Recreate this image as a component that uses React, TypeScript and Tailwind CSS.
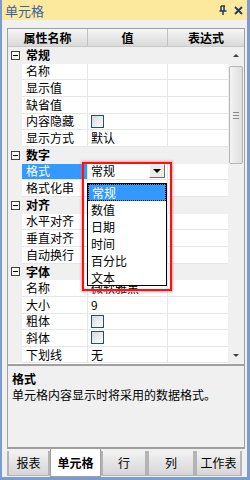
type Row =
  | { kind: "group"; label: string }
  | { kind: "prop"; label: string; value?: string; check?: boolean; selected?: boolean; dropdown?: boolean };

const rows: Row[] = [
  { kind: "group", label: "常规" },
  { kind: "prop", label: "名称" },
  { kind: "prop", label: "显示值" },
  { kind: "prop", label: "缺省值" },
  { kind: "prop", label: "内容隐藏", check: true },
  { kind: "prop", label: "显示方式", value: "默认" },
  { kind: "group", label: "数字" },
  { kind: "prop", label: "格式", value: "常规", selected: true, dropdown: true },
  { kind: "prop", label: "格式化串" },
  { kind: "group", label: "对齐" },
  { kind: "prop", label: "水平对齐" },
  { kind: "prop", label: "垂直对齐" },
  { kind: "prop", label: "自动换行" },
  { kind: "group", label: "字体" },
  { kind: "prop", label: "名称", value: "微软雅黑" },
  { kind: "prop", label: "大小", value: "9" },
  { kind: "prop", label: "粗体", check: true },
  { kind: "prop", label: "斜体", check: true },
  { kind: "prop", label: "下划线", value: "无" },
];

const options = ["常规", "数值", "日期", "时间", "百分比", "文本"];
const tabs = ["报表", "单元格", "行", "列", "工作表"];

function Checkbox() {
  return <div className="w-[13px] h-[13px] border border-[#1c5180] bg-linear-to-br from-[#d8d8d8] to-white" />;
}

function Collapse() {
  return (
    <div className="w-[9px] h-[9px] border border-[#404040] bg-white flex items-center justify-center">
      <div className="w-[5px] h-px bg-black" />
    </div>
  );
}

function GridRow({ row }: { row: Row }) {
  if (row.kind === "group") {
    return (
      <div className="h-[16.67px] flex items-center bg-[#f0f0f0]">
        <div className="w-[14px] flex justify-center pl-[1px]">
          <Collapse />
        </div>
        <span className="pl-[4px] font-bold leading-none">{row.label}</span>
      </div>
    );
  }
  return (
    <div className="h-[16.67px] flex">
      <div className="w-[14px] bg-[#f0f0f0]" />
      <div
        className={`w-[66px] border-r border-b border-[#e6e6e6] pl-[4px] flex items-center leading-none ${
          row.selected ? "bg-[#3399ff] text-white" : "bg-white"
        }`}
      >
        {row.label}
      </div>
      <div className="w-[80px] border-r border-b border-[#e6e6e6] bg-white pl-[3px] pr-[2px] flex items-center leading-none">
        {row.check ? <Checkbox /> : row.value}
        {row.dropdown && (
          <div className="ml-auto w-[16px] h-[14px] border border-t-white border-l-white border-r-[#707070] border-b-[#707070] bg-[#ececec] flex items-center justify-center">
            <div className="w-0 h-0 border-l-[4px] border-r-[4px] border-t-[4px] border-l-transparent border-r-transparent border-t-black" />
          </div>
        )}
      </div>
      <div className="flex-1 border-b border-[#e6e6e6] bg-white" />
    </div>
  );
}

export default function App() {
  return (
    <div className="relative w-[250px] h-[480px] flex flex-col bg-[#f0f0f0] border-l-2 border-r-[3px] border-b-[3px] border-[#7b9bd1] text-[12px] text-black font-['Noto_Sans_CJK_SC','Noto_Sans',sans-serif] overflow-hidden">
      {/* title bar */}
      <div className="h-[20px] shrink-0 bg-[#fde99e] flex items-center pl-[3px] pr-[4px]">
        <span className="text-[13px] text-[#3563a8] leading-none">单元格</span>
        <div className="ml-auto flex items-center gap-[7px]">
          <svg width="8" height="10" viewBox="0 0 8 10" className="text-[#1e3a62]">
            <path d="M2 1h4M2 1v5M5 1v5M0.5 6h7M4 6v4" stroke="currentColor" strokeWidth="1.5" fill="none" />
          </svg>
          <svg width="9" height="9" viewBox="0 0 9 9" className="text-[#1e3a62]">
            <path d="M1 1l7 7M8 1l-7 7" stroke="currentColor" strokeWidth="1.8" fill="none" />
          </svg>
        </div>
      </div>

      <div className="flex-1 flex flex-col pt-[8px] pl-[5px] pr-[2px]">
        {/* property grid */}
        <div className="h-[337px] shrink-0 border border-[#a0a0a0] bg-white flex flex-col">
          <div className="h-[18px] shrink-0 flex font-bold bg-linear-to-b from-[#f6f6f6] to-[#d9d9d9] border-b border-[#c8c8c8]">
            <div className="w-[80px] flex items-center justify-center border-r border-[#c0c0c0]">属性名称</div>
            <div className="w-[80px] flex items-center justify-center border-r border-[#c0c0c0]">值</div>
            <div className="flex-1 flex items-center justify-center">表达式</div>
          </div>
          <div className="flex-1 flex overflow-hidden">
            <div className="flex-1 overflow-hidden">
              {rows.map((r, i) => (
                <GridRow key={`row/${i}`} row={r} />
              ))}
            </div>
            {/* scrollbar */}
            <div className="w-[16px] bg-[#f0f0f0] flex flex-col items-center">
              <div className="h-[17px] flex items-center justify-center">
                <div className="w-0 h-0 border-l-[3px] border-r-[3px] border-b-[3px] border-l-transparent border-r-transparent border-b-[#404040]" />
              </div>
              <div className="mt-[2px] w-[14px] h-[98px] rounded-[2px] border border-[#b5b5b5] bg-linear-to-r from-[#f4f4f4] to-[#dedede] flex flex-col items-center justify-center gap-[2px]">
                <div className="w-[6px] h-px bg-[#8a8a8a]" />
                <div className="w-[6px] h-px bg-[#8a8a8a]" />
                <div className="w-[6px] h-px bg-[#8a8a8a]" />
              </div>
              <div className="flex-1" />
              <div className="h-[17px] flex items-center justify-center">
                <div className="w-0 h-0 border-l-[3px] border-r-[3px] border-t-[3px] border-l-transparent border-r-transparent border-t-[#404040]" />
              </div>
            </div>
          </div>
        </div>

        {/* description */}
        <div className="h-[84px] shrink-0 border border-[#a0a0a0] border-b-2 bg-[#f0f0f0] px-[4px] pt-[5px]">
          <div className="font-bold leading-[16px]">格式</div>
          <div className="leading-[16px]">单元格内容显示时将采用的数据格式。</div>
        </div>

        {/* tabs */}
        <div className="flex-1 flex items-start pt-[2px]">
          {tabs.map((t, i) =>
            i === 1 ? (
              <div
                key={t}
                className="w-[51px] h-[28px] -mt-[2px] bg-white border border-t-0 border-[#a0a0a0] flex items-center justify-center font-bold"
              >
                {t}
              </div>
            ) : (
              <div
                key={t}
                className={`h-[25px] ${
                  i === 0 ? "w-[43px]" : i === 2 ? "w-[46px]" : i === 3 ? "w-[48px]" : "w-[47px]"
                } bg-linear-to-b from-[#f2f2f2] to-[#d6d6d6] border-x-2 border-b border-[#b4b4b4] flex items-center justify-center`}
              >
                {t}
              </div>
            )
          )}
        </div>
      </div>

      {/* dropdown list overlay */}
      <div className="absolute left-[85px] top-[183px] w-[80px] h-[103px] border border-black bg-white">
        {options.map((o, i) => (
          <div
            key={o}
            className={`h-[17px] pl-[3px] flex items-center leading-none ${
              i === 0 ? "bg-[#3399ff] text-white border border-dotted border-white outline outline-1 outline-dotted outline-black -outline-offset-1" : ""
            }`}
          >
            {o}
          </div>
        ))}
      </div>

      {/* highlight */}
      <div className="absolute left-[80px] top-[162px] w-[90px] h-[129px] border-2 border-[#ff1010] shadow-[0_0_2px_1px_rgba(255,80,80,0.5)]" />
    </div>
  );
}
